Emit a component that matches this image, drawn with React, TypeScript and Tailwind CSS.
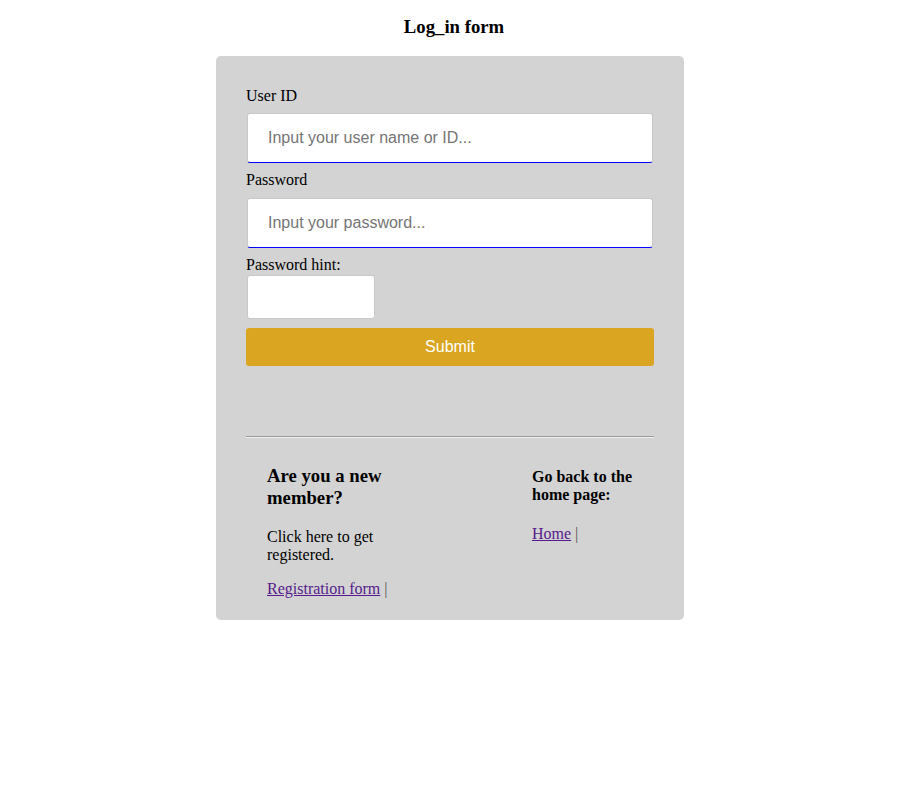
import React from 'react';

// Formulario de ingreso
const App: React.FC = () => {
  return (
    <div className="min-h-[800px] bg-white font-['Liberation_Serif',serif] text-black">
      <h3 className="pt-[16px] pl-[8px] text-center text-[18.72px] font-bold leading-[22px]">Log_in form</h3>

      <div className="mx-auto mt-[18px] w-[468px] rounded-[5px] bg-[#d3d3d3] px-[30px] pt-[31px] pb-[22px]">
        <form className="flex flex-col">
          <label className="text-[16px] leading-[18px]">User ID</label>
          <input
            type="text"
            placeholder="Input your user name or ID..."
            className="mx-px mt-[8px] h-[50px] rounded-[3px] border border-[#c9c9c9] border-b-[#0000ff] bg-white px-[20px] font-['Liberation_Sans',sans-serif] text-[16px] placeholder:text-[#757575] outline-none"
          />

          <label className="mt-[8px] text-[16px] leading-[18px]">Password</label>
          <input
            type="password"
            placeholder="Input your password..."
            className="mx-px mt-[9px] h-[50px] rounded-[3px] border border-[#c9c9c9] border-b-[#0000ff] bg-white px-[20px] font-['Liberation_Sans',sans-serif] text-[16px] placeholder:text-[#757575] outline-none"
          />

          <label className="mt-[8px] text-[16px] leading-[18px]">Password hint:</label>
          <input
            type="text"
            className="mx-px mt-[1px] h-[44px] w-[128px] rounded-[3px] border border-[#c9c9c9] bg-white px-2 outline-none"
          />

          <button
            type="button"
            className="mt-[9px] h-[38px] w-full rounded-[3px] bg-[#daa520] font-['Liberation_Sans',sans-serif] text-[16px] text-white"
          >
            Submit
          </button>
        </form>

        <hr className="mt-[70px] border-t border-b border-t-[#9a9a9a] border-b-[#eeeeee]" />

        <div className="flex justify-between pl-[21px] pt-[9px]">
          {/* Registro de nuevos miembros */}
          <div className="w-[150px]">
            <h3 className="mt-[18px] text-[18.72px] font-bold leading-[22px]">Are you a new member?</h3>
            <p className="mt-[19px] text-[16px] leading-[18px]">Click here to get registered.</p>
            <p className="mt-[16px] text-[16px] leading-[18px]">
              <a href="#" className="text-[#551a8b] underline">Registration form</a>
              <span className="text-[#555]"> |</span>
            </p>
          </div>

          {/* Volver al inicio */}
          <div className="w-[122px]">
            <h4 className="mt-[21px] text-[16px] font-bold leading-[18px]">Go back to the home page:</h4>
            <p className="mt-[21px] text-[16px] leading-[18px]">
              <a href="#" className="text-[#551a8b] underline">Home</a>
              <span className="text-[#555]"> |</span>
            </p>
          </div>
        </div>
      </div>
    </div>
  );
};

export default App;
